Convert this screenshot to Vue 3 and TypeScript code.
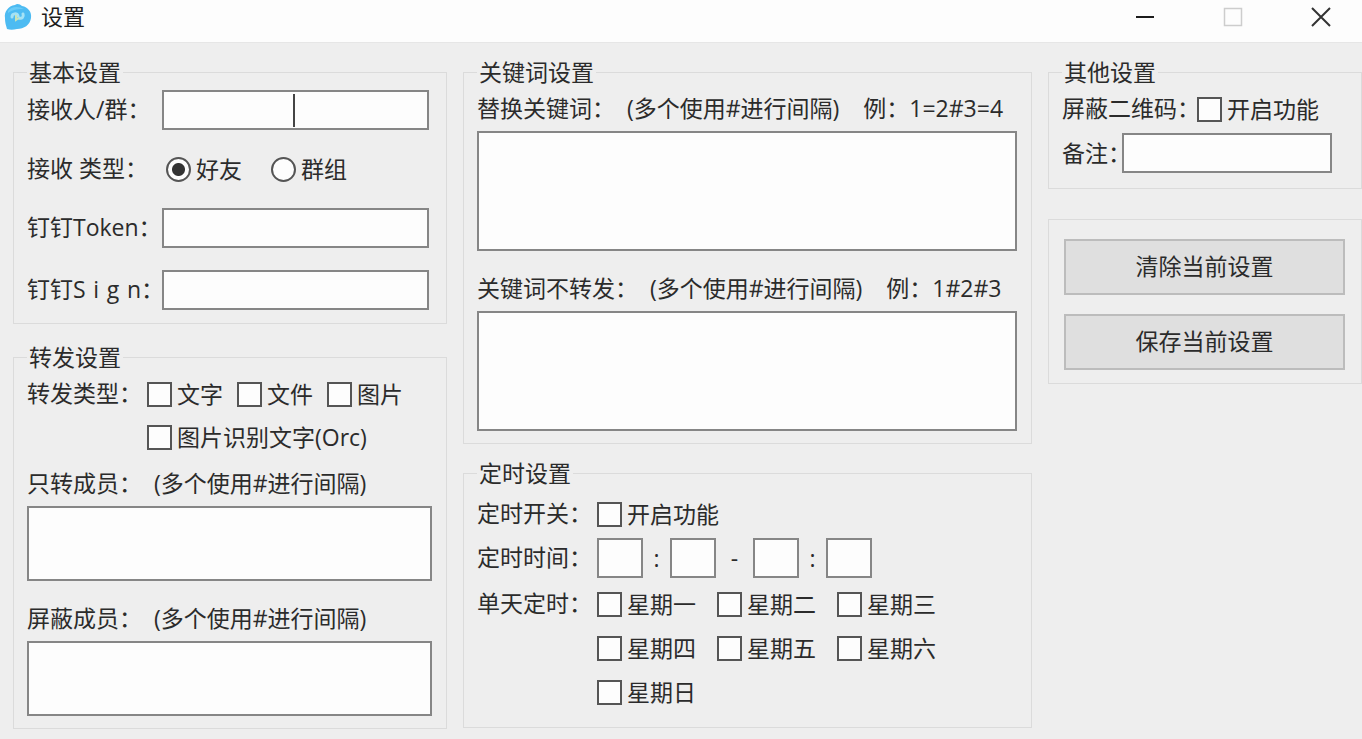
<script setup lang="ts">
import { reactive, ref } from 'vue'

const receiver = ref('')
const receiveType = ref('friend')
const token = ref('')
const sign = ref('')
const onlyMembers = ref('')
const blockedMembers = ref('')
const replaceWords = ref('')
const blockedWords = ref('')
const timerOn = ref(false)
const blockQr = ref(false)
const remark = ref('')
const times = reactive(['', '', '', ''])
const timeNames = ['开始小时', '开始分钟', '结束小时', '结束分钟']
const separators = [':', '-', ':']
const forwardTypes = reactive([
  { name: '文字', on: false },
  { name: '文件', on: false },
  { name: '图片', on: false },
  { name: '图片识别文字(Orc)', on: false },
])
const days = reactive(
  ['星期一', '星期二', '星期三', '星期四', '星期五', '星期六', '星期日'].map((name) => ({ name, on: false })),
)

function clearAll() {
  for (const field of [receiver, token, sign, onlyMembers, blockedMembers, replaceWords, blockedWords, remark]) {
    field.value = ''
  }
  timerOn.value = false
  blockQr.value = false
  receiveType.value = 'friend'
  times.fill('')
  forwardTypes.forEach((t) => (t.on = false))
  days.forEach((d) => (d.on = false))
}

function save() {
  localStorage.setItem('settings', JSON.stringify({ receiver: receiver.value, token: token.value, sign: sign.value }))
}
</script>

<template>
  <div class="window">
    <header class="titlebar">
      <svg class="logo" viewBox="0 0 28 28" aria-hidden="true">
        <path d="M3 26C2 22 1 20 1 15C0 9 4 3 11 2C13 0 16 1 18 3C24 4 28 9 27 15C26 22 20 26 13 26C9 27 6 27 3 26Z" fill="#4dbbf2" />
        <path d="M4 8C7 3 15 3 20 6C16 6 9 6 4 10Z" fill="#6accf8" />
        <path d="M8 14C8 10 13 10 14 13M15 15C18 16 20 14 19 11" fill="none" stroke="#a5e2f5" stroke-width="3" stroke-linecap="round" />
        <path d="M12 12L12 17L15 15" fill="none" stroke="#c9e3b8" stroke-width="2" />
      </svg>
      <h1>设置</h1>
      <div class="controls">
        <button type="button" aria-label="最小化">
          <svg viewBox="0 0 20 20"><path d="M1 10H19" stroke="#1c1c1c" stroke-width="2" /></svg>
        </button>
        <button type="button" aria-label="最大化" disabled>
          <svg viewBox="0 0 20 20"><rect x="1.5" y="1.5" width="17" height="17" fill="none" stroke="#cdcdcd" stroke-width="1.5" /></svg>
        </button>
        <button type="button" aria-label="关闭">
          <svg viewBox="0 0 20 20"><path d="M1 1L19 19M19 1L1 19" fill="none" stroke="#333" stroke-width="2" /></svg>
        </button>
      </div>
    </header>

    <main class="board">
      <div class="column">
        <fieldset class="basic">
          <legend>基本设置</legend>
          <div class="row wide">
            <label for="receiver">接收人/群：</label>
            <span class="caret-box"><input id="receiver" v-model="receiver" type="text" /><i class="caret"></i></span>
          </div>
          <div class="row wide kind">
            <span class="caption">接收 类型：</span>
            <label class="choice"><input v-model="receiveType" type="radio" name="kind" value="friend" />好友</label>
            <label class="choice"><input v-model="receiveType" type="radio" name="kind" value="group" />群组</label>
          </div>
          <div class="row wide">
            <label for="token">钉钉Token：</label>
            <input id="token" v-model="token" type="text" />
          </div>
          <div class="row wide sign">
            <label for="sign">钉钉S&#x2004;i&#x2004;g&#x2004;n：</label>
            <input id="sign" v-model="sign" type="text" />
          </div>
        </fieldset>

        <fieldset class="forward">
          <legend>转发设置</legend>
          <div class="row top">
            <span class="caption">转发类型：</span>
            <div class="types">
              <label v-for="t in forwardTypes" :key="t.name" class="choice"><input v-model="t.on" type="checkbox" />{{ t.name }}</label>
            </div>
          </div>
          <div class="area">
            <label for="only">只转成员：&nbsp;&nbsp;(多个使用#进行间隔)</label>
            <textarea id="only" v-model="onlyMembers" class="short"></textarea>
          </div>
          <div class="area">
            <label for="blocked">屏蔽成员：&nbsp;&nbsp;(多个使用#进行间隔)</label>
            <textarea id="blocked" v-model="blockedMembers" class="short"></textarea>
          </div>
        </fieldset>
      </div>

      <div class="column">
        <fieldset class="keywords">
          <legend>关键词设置</legend>
          <div class="area">
            <label for="replace">替换关键词：&nbsp;&nbsp;(多个使用#进行间隔)&nbsp;&nbsp;&nbsp;&nbsp;例：1=2#3=4</label>
            <textarea id="replace" v-model="replaceWords"></textarea>
          </div>
          <div class="area">
            <label for="skip">关键词不转发：&nbsp;&nbsp;(多个使用#进行间隔)&nbsp;&nbsp;&nbsp;&nbsp;例：1#2#3</label>
            <textarea id="skip" v-model="blockedWords"></textarea>
          </div>
        </fieldset>

        <fieldset class="timer">
          <legend>定时设置</legend>
          <div class="row">
            <span class="caption">定时开关：</span>
            <label class="choice"><input v-model="timerOn" type="checkbox" />开启功能</label>
          </div>
          <div class="row times">
            <span class="caption">定时时间：</span>
            <template v-for="(name, i) in timeNames" :key="name">
              <input v-model="times[i]" type="text" :aria-label="name" />
              <span v-if="i < 3" class="separator" :class="{ dash: i === 1 }">{{ separators[i] }}</span>
            </template>
          </div>
          <div class="row top">
            <span class="caption">单天定时：</span>
            <div class="days">
              <label v-for="d in days" :key="d.name" class="choice"><input v-model="d.on" type="checkbox" />{{ d.name }}</label>
            </div>
          </div>
        </fieldset>
      </div>

      <div class="column side">
        <fieldset class="other">
          <legend>其他设置</legend>
          <div class="row">
            <span class="caption">屏蔽二维码：</span>
            <label class="choice"><input v-model="blockQr" type="checkbox" />开启功能</label>
          </div>
          <div class="row remark">
            <label for="remark">备注：</label>
            <input id="remark" v-model="remark" type="text" />
          </div>
        </fieldset>
        <fieldset class="actions" aria-label="操作">
          <button type="button" @click="clearAll">清除当前设置</button>
          <button type="button" @click="save">保存当前设置</button>
        </fieldset>
      </div>
    </main>
  </div>
</template>

<style>
body {
  margin: 0;
  background: #eee;
}
</style>

<style scoped>
.window {
  min-height: 100vh;
  box-sizing: border-box;
  background: #eee;
  color: #2b2b2b;
  font: 23px/24px "Open Sans", "Noto Sans CJK SC", sans-serif;
  text-spacing-trim: space-all;
  white-space: nowrap;
}
*,
*::before {
  box-sizing: border-box;
}
.titlebar {
  display: flex;
  align-items: center;
  height: 43px;
  padding: 0 0 9px 4px;
  background: #fdfdfd;
  border-bottom: 1px solid #e6e6e6;
}
.logo {
  width: 28px;
  height: 28px;
}
h1 {
  margin: 0 0 0 9px;
  padding-bottom: 2px;
  font-size: 22px;
  line-height: 22px;
  font-weight: 400;
  color: #1c1c1c;
}
.controls {
  display: flex;
  gap: 68px;
  margin-left: auto;
  padding-right: 31px;
}
.controls button {
  width: 20px;
  height: 20px;
  padding: 0;
  border: 0;
  background: none;
}
.controls svg {
  display: block;
}
.board {
  display: grid;
  grid-template-columns: 434fr 569fr 314fr;
  column-gap: 16px;
  padding: 17px 0 10px 13px;
}
.column {
  display: flex;
  flex-direction: column;
  min-width: 0;
}
fieldset {
  min-width: 0;
  margin: 0;
  padding: 0 14px 11px 13px;
  border: 1px solid #dbdbdb;
}
legend {
  padding: 0 2px;
}
.row {
  display: flex;
  align-items: center;
}
.row.top {
  align-items: flex-start;
}
.row.wide {
  padding-right: 3px;
}
.row.wide > :first-child {
  flex: 0 0 135px;
  min-width: 0;
  padding-bottom: 3px;
}
.caption {
  flex: 0 0 120px;
  min-width: 0;
  padding-bottom: 3px;
  line-height: 22px;
}
input[type="text"],
textarea {
  display: block;
  min-width: 0;
  margin: 0;
  padding: 2px 6px;
  border: 2px solid #868686;
  border-radius: 0;
  background: #fdfdfd;
  font: inherit;
  outline: 0;
  resize: none;
}
input[type="text"] {
  flex: 1;
  width: 100%;
  height: 40px;
}
textarea {
  width: 100%;
  height: 120px;
}
textarea.short {
  height: 75px;
}
.caret-box {
  position: relative;
  flex: 1;
}
.caret {
  position: absolute;
  top: 4px;
  bottom: 3px;
  left: 49%;
  width: 2px;
  background: #444;
}
.choice {
  display: flex;
  align-items: flex-start;
  gap: 5px;
  line-height: 24px;
}
input[type="checkbox"],
input[type="radio"] {
  appearance: none;
  flex: none;
  width: 25px;
  height: 25px;
  margin: 0;
  border: 2px solid #555;
  background: #fdfdfd;
}
input[type="radio"] {
  border-radius: 50%;
}
input[type="radio"]:checked {
  background: radial-gradient(circle, #333 6px, #fdfdfd 7px);
}
input[type="checkbox"]:checked {
  background: #555;
  box-shadow: inset 0 0 0 3px #fdfdfd;
}
.basic {
  padding-top: 6px;
  padding-bottom: 13px;
}
.kind {
  padding: 27px 0 26px;
}
.kind .choice:nth-child(2) {
  margin-left: 4px;
}
.kind .choice + .choice {
  margin-left: 29px;
}
.sign {
  margin-top: 22px;
}
.forward {
  margin-top: 21px;
  padding-top: 13px;
  padding-bottom: 12px;
}
.types {
  display: flex;
  flex-wrap: wrap;
  gap: 18px 14px;
}
.area {
  padding-top: 25px;
}
.area label {
  display: block;
  margin-bottom: 11px;
}
.forward .area:nth-child(3) {
  padding-top: 21px;
}
.keywords .area:nth-child(2) {
  padding-top: 12px;
}
.keywords {
  padding-bottom: 12px;
}
.timer {
  margin-top: 17px;
  padding-top: 17px;
  padding-bottom: 22px;
}
.times {
  margin: 11px 0 14px;
}
.row.times input {
  flex: 0 0 46px;
}
.separator {
  width: 27px;
  text-align: center;
}
.dash {
  width: 37px;
}
.days {
  display: grid;
  grid-template-columns: repeat(3, 99px);
  gap: 19px 21px;
}
.other {
  padding-top: 13px;
  padding-bottom: 15px;
}
.other .caption {
  flex-basis: 135px;
}
.remark {
  margin-top: 11px;
  padding-right: 15px;
}
.remark label {
  flex: 0 0 60px;
  min-width: 0;
}
.actions {
  display: grid;
  gap: 19px;
  margin-top: 30px;
  padding: 19px 16px 13px 15px;
}
.actions button {
  height: 56px;
  padding: 0 0 3px;
  border: 2px solid #bcbcbc;
  background: #dfdfdf;
  color: inherit;
  font: inherit;
}
</style>
